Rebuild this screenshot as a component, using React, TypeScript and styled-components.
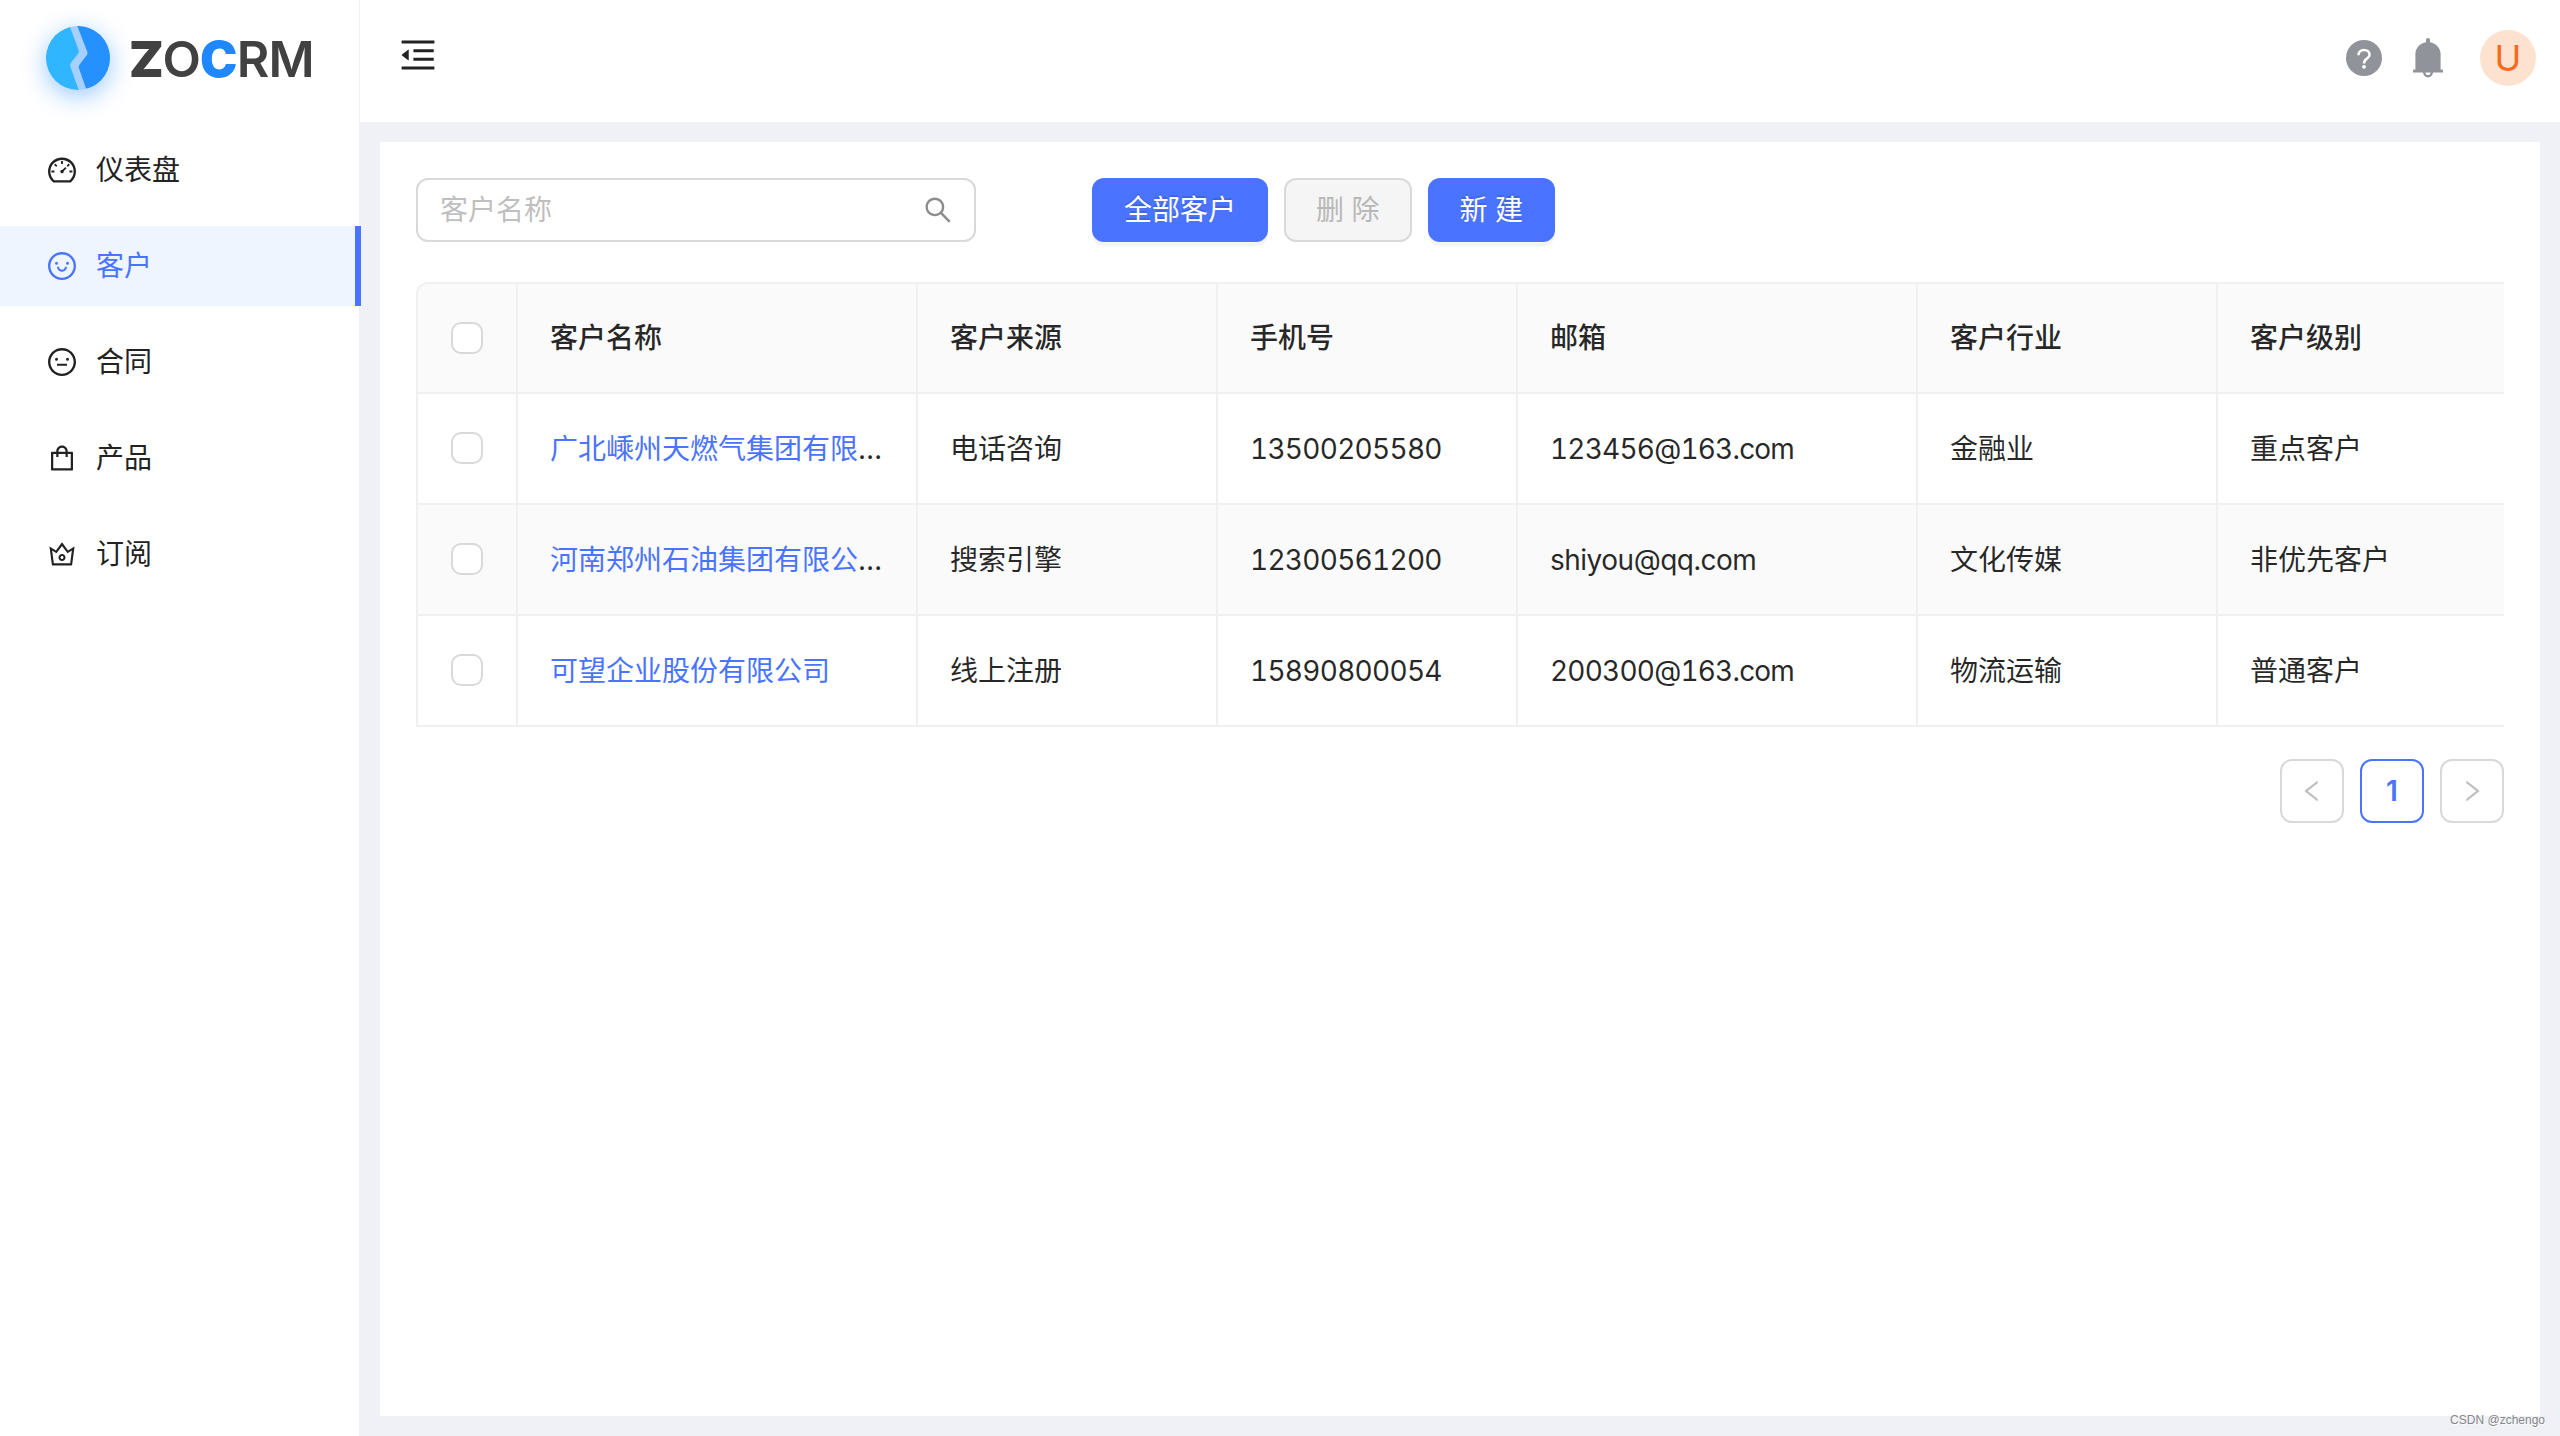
import React from "react";
import styled, { createGlobalStyle, css } from "styled-components";
import {
  AiOutlineDashboard,
  AiOutlineSmile,
  AiOutlineMeh,
  AiOutlineShopping,
  AiOutlineCrown,
  AiOutlineMenuFold,
  AiOutlineSearch,
  AiOutlineLeft,
  AiOutlineRight,
} from "react-icons/ai";

const primary = "#4a74ff";
const line = "#f0f0f0";
const inputBorder = "#d9d9d9";

const GlobalStyle = createGlobalStyle`
  * { box-sizing: border-box; }
  body {
    margin: 0;
    background: #f0f1f6;
    color: rgba(0, 0, 0, 0.85);
    font-family: Inter, "Noto Sans CJK SC", sans-serif;
    font-size: 28px;
    line-height: 44px;
    font-variant-numeric: tabular-nums;
  }
`;

const Layout = styled.div`
  display: grid;
  grid-template-columns: 360px minmax(0, 1fr);
  height: 1436px;
  overflow: hidden;
`;

const Sider = styled.aside`
  background: #fff;
  border-right: 1px solid #eff0f5;
`;

const Brand = styled.div`
  display: flex;
  align-items: center;
  height: 116px;
  padding-left: 46px;
`;

const Mark = styled.svg`
  display: block;
  border-radius: 50%;
  background: rgba(33, 137, 255, 0.4);
  box-shadow: 0 6px 24px rgba(33, 137, 255, 0.46);
`;

const BrandName = styled.div`
  display: flex;
  margin-left: 19px;
  padding-top: 1px;
  font-size: 50px;
  line-height: 60px;
  color: #414141;
`;

const Letter = styled.span<{ $weight: number; $blue?: boolean; $shift?: number }>`
  font-weight: ${(p) => p.$weight};
  color: ${(p) => (p.$blue ? "#1f87ff" : "inherit")};
  margin-right: ${(p) => p.$shift ?? 0}px;
`;

const Menu = styled.nav`
  display: flex;
  flex-direction: column;
  gap: 16px;
  padding-top: 14px;
`;

const MenuItem = styled.a<{ $active?: boolean }>`
  display: flex;
  align-items: center;
  gap: 18px;
  height: 80px;
  padding-left: 46px;
  color: #222;
  svg { width: 32px; height: 32px; }
  ${(p) =>
    p.$active &&
    css`
      margin-right: -2px;
      color: ${primary};
      background: #eff5ff;
      border-right: 6px solid ${primary};
    `}
`;

const Main = styled.div`
  display: flex;
  flex-direction: column;
`;

const Header = styled.header`
  display: flex;
  align-items: center;
  height: 122px;
  padding: 0 24px 6px 37px;
  background: #fff;
`;

const Fold = styled(AiOutlineMenuFold)`
  width: 42px;
  height: 42px;
  margin: 0 auto 6px 0;
  color: #222;
`;

const HelpIcon = styled.svg`
  margin-right: 31px;
`;

const BellIcon = styled.svg`
  margin-right: 37px;
`;

const Avatar = styled.div`
  width: 56px;
  height: 56px;
  border-radius: 50%;
  background: #fde3cf;
  color: #f8691c;
  font-size: 36px;
  line-height: 56px;
  text-align: center;
`;

const Panel = styled.main`
  height: 1274px;
  margin: 20px 20px 0;
  padding: 36px;
  background: #fff;
`;

const Toolbar = styled.div`
  display: flex;
  gap: 16px;
  margin-bottom: 40px;
`;

const Search = styled.label`
  display: flex;
  align-items: center;
  width: 560px;
  height: 64px;
  margin-right: 100px;
  padding: 0 20px 0 22px;
  border: 2px solid ${inputBorder};
  border-radius: 12px;
  input {
    flex: 1;
    min-width: 0;
    padding: 0;
    border: 0;
    outline: 0;
    font: inherit;
  }
  input::placeholder { color: #bfbfbf; opacity: 1; }
  svg { width: 32px; height: 32px; color: #8c8c8c; }
`;

const Button = styled.button`
  height: 64px;
  padding: 0 30px;
  border: 2px solid ${primary};
  border-radius: 12px;
  background: ${primary};
  color: #fff;
  font: inherit;
  line-height: 60px;
  white-space: nowrap;
  text-shadow: 0 -2px 0 rgba(0, 0, 0, 0.12);
  box-shadow: 0 4px 0 rgba(0, 0, 0, 0.045);
  &:disabled {
    border-color: ${inputBorder};
    background: #f5f5f5;
    color: #b8b8b8;
    text-shadow: none;
    box-shadow: none;
  }
`;

const TableFrame = styled.div`
  height: 445px;
  overflow: hidden;
  border-top: 2px solid ${line};
  border-left: 2px solid ${line};
  border-top-left-radius: 12px;
`;

const Checkbox = styled.span`
  flex: none;
  width: 32px;
  height: 32px;
  margin-left: 1px;
  border: 2px solid ${inputBorder};
  border-radius: 10px;
  background: #fff;
`;

const Cell = styled.div<{ $tight?: number }>`
  display: flex;
  align-items: center;
  padding: 0 32px;
  border-right: 2px solid ${line};
  border-bottom: 2px solid ${line};
  letter-spacing: ${(p) => p.$tight ?? 0}px;
`;

const Row = styled.div<{ $striped?: boolean }>`
  display: grid;
  grid-template-columns: 100px 400px 300px 300px 400px 300px 300px;
  height: 111px;
  background: ${(p) => (p.$striped ? "#fafafa" : "#fff")};
  ${Cell} { padding-top: 1px; }
  ${Checkbox} { margin-top: -2px; }
`;

const HeadRow = styled.div`
  display: grid;
  grid-template-columns: 100px 400px 300px 300px 400px 300px 300px;
  height: 110px;
  background: #fafafa;
  font-weight: 500;
`;

const Ellipsis = styled.div`
  min-width: 0;
  overflow: hidden;
  white-space: nowrap;
  text-overflow: ellipsis;
  letter-spacing: -0.8px;
`;

const CustomerLink = styled.a`
  color: ${primary};
  letter-spacing: 0;
`;

const Pagination = styled.div`
  display: flex;
  justify-content: flex-end;
  gap: 16px;
  margin-top: 32px;
`;

const PageButton = styled.div<{ $current?: boolean }>`
  display: flex;
  align-items: center;
  justify-content: center;
  width: 64px;
  height: 64px;
  border: 2px solid ${(p) => (p.$current ? primary : inputBorder)};
  border-radius: 12px;
  color: ${(p) => (p.$current ? primary : "#bfbfbf")};
  font-weight: 600;
  font-variant-numeric: normal;
  svg { width: 28px; height: 28px; }
`;

const Watermark = styled.div`
  position: absolute;
  right: 15px;
  bottom: 8px;
  color: #85868a;
  font: 12px/16px "Liberation Sans", sans-serif;
  text-shadow: 1px 1px 0 rgba(255, 255, 255, 0.7);
`;

const menu = [
  { label: "仪表盘", Icon: AiOutlineDashboard },
  { label: "客户", Icon: AiOutlineSmile, active: true },
  { label: "合同", Icon: AiOutlineMeh },
  { label: "产品", Icon: AiOutlineShopping },
  { label: "订阅", Icon: AiOutlineCrown },
];

const columns = ["客户名称", "客户来源", "手机号", "邮箱", "客户行业", "客户级别"];

const customers = [
  { name: "广北嵊州天燃气集团有限公司", source: "电话咨询", phone: "13500205580", email: "123456@163.com", industry: "金融业", level: "重点客户" },
  { name: "河南郑州石油集团有限公司", source: "搜索引擎", phone: "12300561200", email: "shiyou@qq.com", industry: "文化传媒", level: "非优先客户" },
  { name: "可望企业股份有限公司", source: "线上注册", phone: "15890800054", email: "200300@163.com", industry: "物流运输", level: "普通客户" },
];

const App: React.FC = () => (
  <>
    <GlobalStyle />
    <Layout>
      <Sider>
        <Brand>
          <Mark width="64" height="64" viewBox="0 0 64 64">
            <path d="M24 1A32 32 0 0 0 32.7 64L24.5 41Q23.6 38.5 25 36.7L31.8 28Q33.3 26 32.4 23.5Z" fill="#30b5ff" />
            <path d="M31.3 0A32 32 0 0 1 40.2 63L33 42.6Q32.2 40.2 33.8 38.2L40.6 29.6Q42 27.7 41.2 25.4Z" fill="#2590ff" />
          </Mark>
          <BrandName>
            <Letter $weight={900} $shift={-1.3}>Z</Letter>
            <Letter $weight={600} $shift={-0.8}>O</Letter>
            <Letter $weight={900} $blue $shift={-0.7}>C</Letter>
            <Letter $weight={600} $shift={-0.8}>R</Letter>
            <Letter $weight={600}>M</Letter>
          </BrandName>
        </Brand>
        <Menu>
          {menu.map(({ label, Icon, active }) => (
            <MenuItem key={label} $active={active}>
              <Icon />
              {label}
            </MenuItem>
          ))}
        </Menu>
      </Sider>
      <Main>
        <Header>
          <Fold />
          <HelpIcon width="36" height="36" viewBox="0 0 36 36" fill="none">
            <circle cx="18" cy="18" r="18" fill="#909399" />
            <path d="M12.6 15.2C12.4 11.8 14.7 10 18 10S23.6 11.9 23.6 14.7C23.6 18.8 18 18.4 18 23.4" stroke="#fff" strokeWidth="2.5" />
            <circle cx="18" cy="26.8" r="1.9" fill="#fff" />
          </HelpIcon>
          <BellIcon width="30" height="40" viewBox="0 0 30 40" fill="none">
            <path d="M15 0A2 2 0 0 1 17 2V4.2C23 5.2 27.6 10 27.6 16V31.4H29A1 1 0 0 1 30 32.4V34.5H0V32.4A1 1 0 0 1 1 31.4H2.4V16C2.4 10 7 5.2 13 4.2V2A2 2 0 0 1 15 0Z" fill="#909399" />
            <path d="M11.2 34C11.2 39.7 18.8 39.7 18.8 34" stroke="#909399" strokeWidth="2.4" />
          </BellIcon>
          <Avatar>U</Avatar>
        </Header>
        <Panel>
          <Toolbar>
            <Search>
              <input placeholder="客户名称" />
              <AiOutlineSearch />
            </Search>
            <Button>全部客户</Button>
            <Button disabled>删 除</Button>
            <Button>新 建</Button>
          </Toolbar>
          <TableFrame>
            <HeadRow>
              <Cell><Checkbox /></Cell>
              {columns.map((c) => (
                <Cell key={c}>{c}</Cell>
              ))}
            </HeadRow>
            {customers.map((c, i) => (
              <Row key={c.name} $striped={i === 1}>
                <Cell><Checkbox /></Cell>
                <Cell>
                  <Ellipsis><CustomerLink>{c.name}</CustomerLink></Ellipsis>
                </Cell>
                <Cell>{c.source}</Cell>
                <Cell $tight={-0.72}>{c.phone}</Cell>
                <Cell $tight={i === 1 ? -0.5 : -0.8}>{c.email}</Cell>
                <Cell>{c.industry}</Cell>
                <Cell>{c.level}</Cell>
              </Row>
            ))}
          </TableFrame>
          <Pagination>
            <PageButton><AiOutlineLeft /></PageButton>
            <PageButton $current>1</PageButton>
            <PageButton><AiOutlineRight /></PageButton>
          </Pagination>
        </Panel>
      </Main>
    </Layout>
    <Watermark>CSDN @zchengo</Watermark>
  </>
);

export default App;
